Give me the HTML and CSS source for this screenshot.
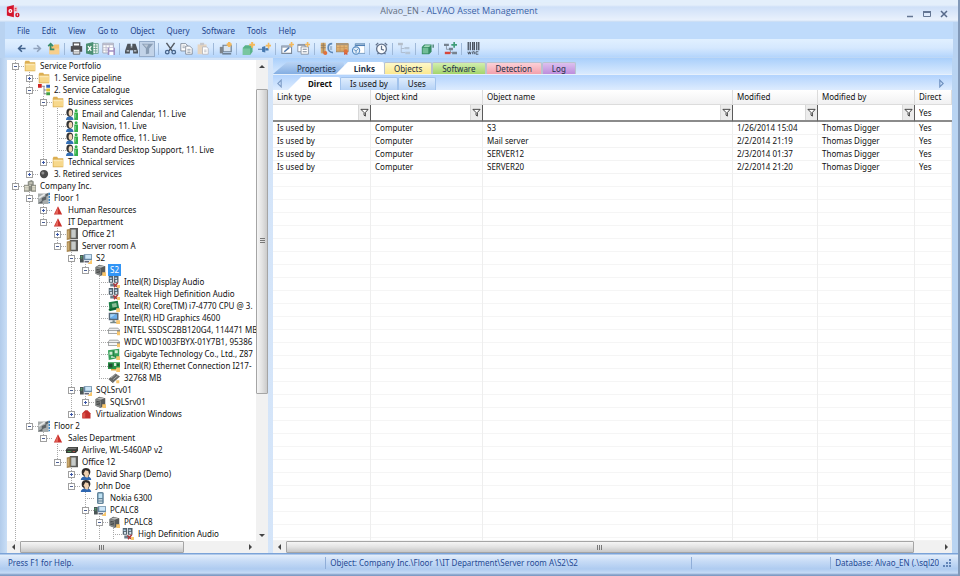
FILE: index.html
```html
<!DOCTYPE html>
<html lang="en">
<head>
<meta charset="utf-8">
<title>Alvao_EN - ALVAO Asset Management</title>
<link rel="stylesheet" href="styles.css">
</head>
<body>
<svg class="sprite" aria-hidden="true">
  <symbol id="logo" viewBox="0 0 16 16"><path d="M1 3l8-2v14l-8-2z" fill="#d4142c"/><circle cx="5" cy="8" r="2.2" fill="#fff"/><circle cx="5" cy="8" r=".9" fill="#d4142c"/><path d="M9 3h4v6H9z" fill="#f6c6cc"/><path d="M10 5h2M10 7h2" stroke="#d4142c"/><circle cx="13" cy="12.500" r="2.500" fill="#d4142c"/><path d="M13 11v2.500" stroke="#fff"/></symbol>
  <symbol id="back" viewBox="0 0 16 16"><path d="M13 8H5M8.500 4L4.500 8l4 4" fill="none" stroke="#41628c" stroke-width="2"/></symbol>
  <symbol id="forward" viewBox="0 0 16 16"><path d="M3 8h8M7.500 4l4 4-4 4" fill="none" stroke="#91a3bd" stroke-width="2"/></symbol>
  <symbol id="upfolder" viewBox="0 0 16 16"><path d="M3 5h5l1-2h6v12H3z" fill="#f3c273"/><path d="M3 8h12v7H3z" fill="#f8cf8c"/><path d="M9 9H4.500V3M1.500 5l3-3 3 3" fill="none" stroke="#388c6b" stroke-width="2"/></symbol>
  <symbol id="print" viewBox="0 0 16 16"><path d="M4 1h8v4H4z" fill="#fff" stroke="#4d4d50" stroke-width="1.500"/><path d="M1 5h14v7H1z" fill="#4d4d50"/><path d="M4 9h8v6H4z" fill="#fff" stroke="#4d4d50"/><path d="M5 11.500h6M5 13.500h6" stroke="#999"/></symbol>
  <symbol id="excel" viewBox="0 0 16 16"><path d="M8 2h7v12H8z" fill="#fff" stroke="#5b9a80"/><path d="M9 5h5M9 8h5M9 11h5M12 2v12" stroke="#5b9a80"/><path d="M0 2l9-2v16l-9-2z" fill="#4b8f72"/><path d="M2.500 5l4 6M6.500 5l-4 6" stroke="#fff" stroke-width="1.500"/></symbol>
  <symbol id="savegrid" viewBox="0 0 16 16"><path d="M1 1.500h13v12H1z" fill="#fff" stroke="#999cab"/><path d="M1 2h13v2H1z" fill="#b7b8c9"/><path d="M1 7h13M1 10h13M5 4v9M9 4v9" stroke="#b7b8c9"/><path d="M7 7h9v9H7z" fill="#9f8fc3"/><path d="M9 7h5v3H9zM9 12h5v4H9z" fill="#fff"/></symbol>
  <symbol id="find" viewBox="0 0 16 16"><path d="M3 2h4v3h2V2h4l3 9v3h-6v-4H6v4H0v-3z" fill="#4e545b"/><path d="M2 11h3M11 11h3M7 6h2" stroke="#d0d7df" stroke-width="1.500"/></symbol>
  <symbol id="filter" viewBox="0 0 16 16"><path d="M1 2h14L10 8v6l-4 1V8z" fill="#899db4"/><path d="M3 3h6L7 7z" fill="#b9c6d5"/></symbol>
  <symbol id="cut" viewBox="0 0 16 16"><path d="M3 1l7 10M13 1L6 11" stroke="#555b63" stroke-width="1.800"/><circle cx="4" cy="12.500" r="2.200" fill="none" stroke="#46648b" stroke-width="1.600"/><circle cx="12" cy="12.500" r="2.200" fill="none" stroke="#46648b" stroke-width="1.600"/></symbol>
  <symbol id="copy" viewBox="0 0 16 16"><path d="M1 2h6l2 2v7H1z" fill="#fff" stroke="#77808e"/><path d="M7 5h5l3 3v7H7z" fill="#fff" stroke="#77808e"/><path d="M3 5h3M3 7h3M9 9h4M9 11h4M9 13h4" stroke="#8d97a5"/></symbol>
  <symbol id="paste" viewBox="0 0 16 16"><path d="M2 3h11v12H2z" fill="#e6d5c0"/><path d="M5 1h5v3H5z" fill="#c7c7ca"/><path d="M8 6h5l2 2v7H8z" fill="#fff" stroke="#b1b4bb"/><path d="M10 10h3M10 12h3" stroke="#b1b4bb"/></symbol>
  <symbol id="newpc" viewBox="0 0 16 16"><path d="M5 4h10v8H5z" fill="#d9e4ef" stroke="#6f8194" stroke-width="1.500"/><path d="M1 6h4v8H1z" fill="#7d848b"/><path d="M4 14.500h11" stroke="#6f8194" stroke-width="2"/><path d="M12.500 0v6M9.500 3h6" stroke="#f4b95c" stroke-width="3"/></symbol>
  <symbol id="newbox" viewBox="0 0 16 16"><path d="M1 7l3-3h9v8l-3 4H1z" fill="#59b287"/><path d="M1 8h9v8H1z" fill="#78c6a0"/><path d="M12.500 0v7M9 3.500h7" stroke="#f4b95c" stroke-width="2.500"/></symbol>
  <symbol id="newlink" viewBox="0 0 16 16"><path d="M0 9h7" stroke="#688cb5" stroke-width="1.500"/><path d="M5 6l4-1v8l-4-1z" fill="#4779b0"/><path d="M9 9h4" stroke="#4779b0" stroke-width="3"/><path d="M13 1v7M9.500 4.500h6.500" stroke="#f4b95c" stroke-width="2"/></symbol>
  <symbol id="edit" viewBox="0 0 16 16"><path d="M1 5h12v9H1z" fill="#fff" stroke="#7c8898" stroke-width="1.300"/><path d="M1 6h12" stroke="#9dabbd" stroke-width="2"/><path d="M4 12l6-5" stroke="#5078aa" stroke-width="2"/><path d="M13 0v6M10 3h6" stroke="#f4b95c" stroke-width="2"/></symbol>
  <symbol id="forms" viewBox="0 0 16 16"><path d="M1 3h9v9H1z" fill="#fff" stroke="#7c8898"/><path d="M5 6h9v9H5z" fill="#fff" stroke="#7c8898"/><path d="M7 9h5M7 12h5M1 4h9" stroke="#7c8898" stroke-width="1.300"/><path d="M13 0v6M10 3h6" stroke="#f4b95c" stroke-width="2"/></symbol>
  <symbol id="tools" viewBox="0 0 16 16"><path d="M1 1h6v13H1z" fill="#d5a868"/><path d="M1 4h6M1 7h6M4 1v13" stroke="#8b7a60"/><circle cx="6.500" cy="13.500" r="2.500" fill="#e0703c"/><path d="M15 2c-3 0-5 2-5 5s2 6 6 6" fill="none" stroke="#5d88b8" stroke-width="2"/><path d="M12 5h3v5h-3z" fill="#a5bbd2"/></symbol>
  <symbol id="cert" viewBox="0 0 16 16"><path d="M0 2h15v10H0z" fill="#e3b474" stroke="#9a7f5a"/><path d="M0 2h15v2H0z" fill="#aa967a"/><path d="M1 7h13M1 10h13M5 4v8M10 4v8" stroke="#c4945a"/><path d="M10 12v4l2-1 2 1v-4" fill="#cf573b"/><circle cx="12" cy="11.500" r="2.500" fill="#e0703c"/></symbol>
  <symbol id="webform" viewBox="0 0 16 16"><path d="M4 2h12v12H4z" fill="#fff" stroke="#658fb9"/><path d="M4 3h12v2H4z" fill="#4e7fb5"/><circle cx="5" cy="10.500" r="4.500" fill="#e2edf7" stroke="#568ac0" stroke-width="1.300"/><path d="M2 9l3 2 3-3M5 11v3" stroke="#568ac0" fill="none"/></symbol>
  <symbol id="clock" viewBox="0 0 16 16"><circle cx="8" cy="8.500" r="6" fill="#f9fbfd" stroke="#61718a" stroke-width="1.600"/><path d="M8 4.500V9l3 1M1 4l3-3M15 4l-3-3M3 15l2-2M13 15l-2-2" fill="none" stroke="#61718a" stroke-width="1.500"/></symbol>
  <symbol id="branch" viewBox="0 0 16 16"><path d="M0 1h6v3H0z" fill="#b5bec9"/><path d="M4 4v9h5M4 8h4" fill="none" stroke="#a7b5c6"/><path d="M8 6h6v3H8zM9 12h6v3H9z" fill="#b5c5d7"/></symbol>
  <symbol id="green" viewBox="0 0 16 16"><path d="M1 6l3-3h9v9l-3 3H1z" fill="#368b63"/><path d="M2 7h7v7H2z" fill="#71bd97"/><path d="M3 6h7l2-2H5z" fill="#a2dabb"/><path d="M14 3h2v4h-2z" fill="#5f8f86"/></symbol>
  <symbol id="compare" viewBox="0 0 16 16"><path d="M0 2h6v3H0zM6 7h5v3H6zM10 12h6v3h-6z" fill="#76828f"/><path d="M3 5v4h3M8 10v3h3" stroke="#818c9b" fill="none"/><path d="M12.500 0v7M9 3.500h7" stroke="#3f9d78" stroke-width="2"/><path d="M1 13.500h7" stroke="#d6473c" stroke-width="3"/></symbol>
  <symbol id="barcode" viewBox="0 0 16 16"><path d="M1.500 0v10M4 0v10M7 0v10M9 0v10M12 0v10M14.500 0v10" stroke="#3d4653" stroke-width="1.500"/><path d="M1 12l1 3 1-3 1 3 1-3M7 15v-3h2v3M14 12h-3v3h3" fill="none" stroke="#3d4653"/></symbol>
  <symbol id="funnel" viewBox="0 0 10 10"><path d="M1 1.500h8L6 5v4L4.500 8V5z" fill="#fff" stroke="#333"/></symbol>

  <symbol id="folder" viewBox="0 0 16 16"><path d="M1 3l1-2h5l1 2h7v12H1z" fill="#dcae52"/><path d="M2 5h13v9H2z" fill="#f7d88b"/><path d="M2 5h12v2H2z" fill="#fbe7b3"/></symbol>
  <symbol id="catalogue" viewBox="0 0 16 16"><path d="M0 0h5v5H0z" fill="#d02424"/><path d="M5 3h4M8 3v11M8 8h3M8 13h3" stroke="#667" fill="none"/><path d="M11 1h5v4h-5z" fill="#3366bd"/><path d="M11 6h5v4h-5z" fill="#e1c335"/><path d="M11 11h5v4h-5z" fill="#42a045"/></symbol>
  <symbol id="service" viewBox="0 0 16 16"><path d="M0 16c0-4 3-5 5-5s5 1 5 5z" fill="#336fb5"/><ellipse cx="5" cy="6" rx="4.500" ry="5.500" fill="#333"/><ellipse cx="6" cy="6.500" rx="2.500" ry="4" fill="#f1d5b5"/><path d="M11 6h5v10h-5z" fill="#35b04c"/><circle cx="13.500" cy="3.500" r="2" fill="#35b04c"/><path d="M12.500 8v5" stroke="#8bdc91"/></symbol>
  <symbol id="ball" viewBox="0 0 16 16"><circle cx="8" cy="8" r="5.500" fill="#4c4c4c"/><circle cx="6.500" cy="6.500" r="2" fill="#919191"/></symbol>
  <symbol id="company" viewBox="0 0 16 16"><path d="M5 2l5-2 3 2v13H5z" fill="#8e9188"/><path d="M0 7h7v8H0zM10 7h6v8h-6z" fill="#b8b8ab" stroke="#75776e"/><path d="M1 9h5M1 12h5M11 9h4M11 12h4M7 4h4M7 7h2" stroke="#f1edda" stroke-width="1.300"/></symbol>
  <symbol id="floor" viewBox="0 0 16 16"><path d="M0 2h14v14H0z" fill="#a8adad"/><path d="M0 15l5-3V8l5-2V3l4-2v3l-3 2v4l-5 2v3z" fill="#5c6265"/><path d="M1 8l8-5" stroke="#e6e8e8" stroke-width="2"/><path d="M15 1v14" stroke="#3b83c2" stroke-width="2" stroke-dasharray="3 1"/></symbol>
  <symbol id="dept" viewBox="0 0 16 16"><path d="M8 3l5.500 11h-11z" fill="#c9302c"/><path d="M8 4v9H4z" fill="#e4675c"/></symbol>
  <symbol id="room" viewBox="0 0 16 16"><path d="M5 0h11v15H5z" fill="#5c5c5a"/><path d="M7 2h6v11H7z" fill="#c7cbc9"/><path d="M1 2l5-1v14l-5 1z" fill="#a8864e"/><path d="M2 4l2-1v10l-2 1z" fill="#c9aa71"/></symbol>
  <symbol id="computer" viewBox="0 0 16 16"><path d="M0 4h5v10H0z" fill="#4b5556"/><path d="M1 6h2M1 8h2" stroke="#54cc76"/><path d="M5 3h11v8H5z" fill="#6688a5"/><path d="M7 4h8v5H7z" fill="#cce5f7"/><path d="M6 13h6" stroke="#667" stroke-width="2"/><path d="M16 10v6h-6z" fill="#f8c66c"/></symbol>
  <symbol id="case" viewBox="0 0 16 16"><path d="M2 4l5-3 8 2v9l-6 4-7-3z" fill="#575a5a"/><path d="M2 4l7 2v10l-7-3z" fill="#888b8a"/><path d="M3 7l5 1M3 9l5 1M3 11l5 1" stroke="#343737"/><path d="M3 4l5-2 6 1-5 2z" fill="#babcba"/><path d="M11 11h5v5h-5z" fill="#f8c66c"/></symbol>
  <symbol id="audio" viewBox="0 0 16 16"><path d="M1 0h6v9H1zM8 0h6v9H8z" fill="#51616d"/><path d="M2 2h3v2H2zM9 2h3v2H9z" fill="#b3cfe4"/><circle cx="4" cy="6.500" r="1.500" fill="#dde9f0"/><circle cx="11" cy="6.500" r="1.500" fill="#dde9f0"/><path d="M3 10h7v4H3z" fill="#6b7d89"/><path d="M7 10l6 5M8 15l5-6" stroke="#ae3438" stroke-width="1.800"/><path d="M12 12h4v4h-4z" fill="#f8c66c"/></symbol>
  <symbol id="cpu" viewBox="0 0 16 16"><path d="M1 3l12-2 2 11-13 3z" fill="#1c7e46"/><path d="M5 5l6-1 1 5-6 1z" fill="#8bbd98"/><path d="M1 13l11-2" stroke="#105c31" stroke-width="2"/><path d="M11 11h5v5h-5z" fill="#f8c66c"/></symbol>
  <symbol id="monitor" viewBox="0 0 16 16"><path d="M1 1h13v10H1z" fill="#566777"/><path d="M3 3h9v6H3z" fill="#6caeea"/><path d="M3 3h7L3 8z" fill="#a7d4f5"/><path d="M6 11h3v2h3v2H3v-2h3z" fill="#788"/><path d="M11 11h5v5h-5z" fill="#f8c66c"/></symbol>
  <symbol id="disk" viewBox="0 0 16 16"><path d="M2 5h11l3 3v5H0V8z" fill="#8b8e8f"/><path d="M2 6h11l2 2H1z" fill="#eee"/><path d="M1 9h11v3H1z" fill="#f7f7f7"/><path d="M12 10h4v5h-4z" fill="#f8c66c"/></symbol>
  <symbol id="board" viewBox="0 0 16 16"><path d="M0 3l15-2v12L1 16z" fill="#36a05a"/><path d="M2 5h4v4H2zM9 3h4v4H9zM4 11h5v2H4z" fill="#d2ead2"/><path d="M7 4v7h4" stroke="#176b34" fill="none"/><path d="M11 11h5v5h-5z" fill="#f8c66c"/></symbol>
  <symbol id="nic" viewBox="0 0 16 16"><path d="M0 3h16v9H0z" fill="#279346"/><path d="M1 5h5v5H1z" fill="#214b30"/><path d="M8 4h3v4H8z" fill="#d5e9d5"/><path d="M12 5h3v3h-3z" fill="#1c5e30"/><path d="M4 13h7" stroke="#d8ab43" stroke-width="2"/><path d="M11 10h5v6h-5z" fill="#f8c66c"/></symbol>
  <symbol id="ram" viewBox="0 0 16 16"><path d="M1 9l9-7 6 4-9 8z" fill="#666968"/><path d="M4 8l6-5M7 10l6-5" stroke="#bdbfbd"/><path d="M1 9l6 5v1L1 10z" fill="#333"/><path d="M11 11h4v4h-4z" fill="#f8c66c"/></symbol>
  <symbol id="virtual" viewBox="0 0 16 16"><path d="M3 14V7l4-4h3l4 4v7z" fill="#c32f2c"/><path d="M3 8l4-2v7H3z" fill="#db544b"/></symbol>
  <symbol id="router" viewBox="0 0 16 16"><path d="M3 4h13v5l-3 3H0V7z" fill="#393c38"/><path d="M3 5h12l-2 2H1z" fill="#777"/><path d="M2 10h5" stroke="#4fb461"/><path d="M9 10h3" stroke="#d05447"/></symbol>
  <symbol id="person" viewBox="0 0 16 16"><path d="M1 16c0-3 3-5 7-5s7 2 7 5z" fill="#2e66b0"/><path d="M3 9c-2-5 0-9 5-9s7 4 5 8l-2 4H7z" fill="#302b29"/><path d="M7 3l4 1 1 4-2 5-3-1-2-5z" fill="#efd0af"/></symbol>
  <symbol id="phone" viewBox="0 0 16 16"><rect x="4" y="0" width="9" height="16" rx="2" fill="#63859c"/><path d="M6 2h5v6H6z" fill="#bfe2f4"/><path d="M6 10h5M6 12h5M6 14h5" stroke="#e0e9ee"/></symbol>
</svg>

<header class="titlebar">
  <svg class="logo"><use href="#logo"/></svg>
  <h1>Alvao_EN - <b>ALVAO Asset Management</b></h1>
  <div class="winbtns">
    <button aria-label="Minimize"><svg viewBox="0 0 8 8"><path d="M1 6.500h6" stroke="#647693" stroke-width="1.500"/></svg></button>
    <button aria-label="Maximize"><svg viewBox="0 0 8 8"><path d="M.5 1.500h7v5h-7z" fill="none" stroke="#647693"/><path d="M0 2h8" stroke="#647693" stroke-width="2"/></svg></button>
    <button aria-label="Close"><svg viewBox="0 0 8 8"><path d="M1 1l6 6M7 1L1 7" stroke="#56698a" stroke-width="1.500"/></svg></button>
  </div>
</header>

<nav class="menu">
  <button>File</button><button>Edit</button><button>View</button><button>Go to</button><button>Object</button><button>Query</button><button>Software</button><button>Tools</button><button>Help</button>
</nav>

<div class="toolbar">
  <button aria-label="Back"><svg><use href="#back"/></svg></button>
  <button aria-label="Forward"><svg><use href="#forward"/></svg></button>
  <button aria-label="Up"><svg><use href="#upfolder"/></svg></button>
  <i></i>
  <button aria-label="Print"><svg><use href="#print"/></svg></button>
  <button aria-label="Excel"><svg><use href="#excel"/></svg></button>
  <button aria-label="Save view"><svg><use href="#savegrid"/></svg></button>
  <i></i>
  <button aria-label="Find"><svg><use href="#find"/></svg></button>
  <button class="pressed" aria-label="Filter"><svg><use href="#filter"/></svg></button>
  <i></i>
  <button aria-label="Cut"><svg><use href="#cut"/></svg></button>
  <button aria-label="Copy"><svg><use href="#copy"/></svg></button>
  <button aria-label="Paste"><svg><use href="#paste"/></svg></button>
  <i></i>
  <button aria-label="New computer"><svg><use href="#newpc"/></svg></button>
  <i></i>
  <button aria-label="New object"><svg><use href="#newbox"/></svg></button>
  <button aria-label="New link"><svg><use href="#newlink"/></svg></button>
  <i></i>
  <button aria-label="New property"><svg><use href="#edit"/></svg></button>
  <button aria-label="New form"><svg><use href="#forms"/></svg></button>
  <i></i>
  <button aria-label="Tools"><svg><use href="#tools"/></svg></button>
  <button aria-label="License"><svg><use href="#cert"/></svg></button>
  <button aria-label="Web form"><svg><use href="#webform"/></svg></button>
  <i></i>
  <button aria-label="History"><svg><use href="#clock"/></svg></button>
  <i></i>
  <button aria-label="Branch"><svg><use href="#branch"/></svg></button>
  <i></i>
  <button aria-label="Object"><svg><use href="#green"/></svg></button>
  <i></i>
  <button aria-label="Compare"><svg><use href="#compare"/></svg></button>
  <i></i>
  <button aria-label="Barcode"><svg><use href="#barcode"/></svg></button>
</div>

<main>
  <section class="pane treepane">
    <div class="treeview">
      <ul class="tree">
        <li><div class="node"><button class="box" aria-label="Collapse"></button><svg><use href="#folder"/></svg><span>Service Portfolio</span></div>
          <ul>
            <li><div class="node"><button class="box plus" aria-label="Expand"></button><svg><use href="#folder"/></svg><span>1. Service pipeline</span></div></li>
            <li><div class="node"><button class="box" aria-label="Collapse"></button><svg><use href="#catalogue"/></svg><span>2. Service Catalogue</span></div>
              <ul>
                <li><div class="node"><button class="box" aria-label="Collapse"></button><svg><use href="#folder"/></svg><span>Business services</span></div>
                  <ul>
                    <li><div class="node leaf"><svg><use href="#service"/></svg><span>Email and Calendar, 11. Live</span></div></li>
                    <li><div class="node leaf"><svg><use href="#service"/></svg><span>Navision, 11. Live</span></div></li>
                    <li><div class="node leaf"><svg><use href="#service"/></svg><span>Remote office, 11. Live</span></div></li>
                    <li><div class="node leaf"><svg><use href="#service"/></svg><span>Standard Desktop Support, 11. Live</span></div></li>
                  </ul>
                </li>
                <li><div class="node"><button class="box plus" aria-label="Expand"></button><svg><use href="#folder"/></svg><span>Technical services</span></div></li>
              </ul>
            </li>
            <li><div class="node"><button class="box plus" aria-label="Expand"></button><svg><use href="#ball"/></svg><span>3. Retired services</span></div></li>
          </ul>
        </li>
        <li class="more"><div class="node"><button class="box" aria-label="Collapse"></button><svg><use href="#company"/></svg><span>Company Inc.</span></div>
          <ul>
            <li><div class="node"><button class="box" aria-label="Collapse"></button><svg><use href="#floor"/></svg><span>Floor 1</span></div>
              <ul>
                <li><div class="node"><button class="box plus" aria-label="Expand"></button><svg><use href="#dept"/></svg><span>Human Resources</span></div></li>
                <li><div class="node"><button class="box" aria-label="Collapse"></button><svg><use href="#dept"/></svg><span>IT Department</span></div>
                  <ul>
                    <li><div class="node"><button class="box plus" aria-label="Expand"></button><svg><use href="#room"/></svg><span>Office 21</span></div></li>
                    <li><div class="node"><button class="box" aria-label="Collapse"></button><svg><use href="#room"/></svg><span>Server room A</span></div>
                      <ul>
                        <li><div class="node"><button class="box" aria-label="Collapse"></button><svg><use href="#computer"/></svg><span>S2</span></div>
                          <ul>
                            <li><div class="node"><button class="box" aria-label="Collapse"></button><svg><use href="#case"/></svg><span class="selected">S2</span></div>
                              <ul>
                                <li><div class="node leaf"><svg><use href="#audio"/></svg><span>Intel(R) Display Audio</span></div></li>
                                <li><div class="node leaf"><svg><use href="#audio"/></svg><span>Realtek High Definition Audio</span></div></li>
                                <li><div class="node leaf"><svg><use href="#cpu"/></svg><span>Intel(R) Core(TM) i7-4770 CPU @ 3.</span></div></li>
                                <li><div class="node leaf"><svg><use href="#monitor"/></svg><span>Intel(R) HD Graphics 4600</span></div></li>
                                <li><div class="node leaf"><svg><use href="#disk"/></svg><span>INTEL SSDSC2BB120G4, 114471 MB</span></div></li>
                                <li><div class="node leaf"><svg><use href="#disk"/></svg><span>WDC WD1003FBYX-01Y7B1, 95386</span></div></li>
                                <li><div class="node leaf"><svg><use href="#board"/></svg><span>Gigabyte Technology Co., Ltd., Z87</span></div></li>
                                <li><div class="node leaf"><svg><use href="#nic"/></svg><span>Intel(R) Ethernet Connection I217-</span></div></li>
                                <li><div class="node leaf"><svg><use href="#ram"/></svg><span>32768 MB</span></div></li>
                              </ul>
                            </li>
                          </ul>
                        </li>
                        <li><div class="node"><button class="box" aria-label="Collapse"></button><svg><use href="#computer"/></svg><span>SQLSrv01</span></div>
                          <ul>
                            <li><div class="node"><button class="box plus" aria-label="Expand"></button><svg><use href="#case"/></svg><span>SQLSrv01</span></div></li>
                          </ul>
                        </li>
                        <li><div class="node"><button class="box plus" aria-label="Expand"></button><svg><use href="#virtual"/></svg><span>Virtualization Windows</span></div></li>
                      </ul>
                    </li>
                  </ul>
                </li>
              </ul>
            </li>
            <li><div class="node"><button class="box" aria-label="Collapse"></button><svg><use href="#floor"/></svg><span>Floor 2</span></div>
              <ul>
                <li><div class="node"><button class="box" aria-label="Collapse"></button><svg><use href="#dept"/></svg><span>Sales Department</span></div>
                  <ul>
                    <li><div class="node leaf"><svg><use href="#router"/></svg><span>Airlive, WL-5460AP v2</span></div></li>
                    <li><div class="node"><button class="box" aria-label="Collapse"></button><svg><use href="#room"/></svg><span>Office 12</span></div>
                      <ul>
                        <li><div class="node"><button class="box plus" aria-label="Expand"></button><svg><use href="#person"/></svg><span>David Sharp (Demo)</span></div></li>
                        <li><div class="node"><button class="box" aria-label="Collapse"></button><svg><use href="#person"/></svg><span>John Doe</span></div>
                          <ul>
                            <li><div class="node leaf"><svg><use href="#phone"/></svg><span>Nokia 6300</span></div></li>
                            <li class="more"><div class="node"><button class="box" aria-label="Collapse"></button><svg><use href="#computer"/></svg><span>PCALC8</span></div>
                              <ul>
                                <li class="more"><div class="node"><button class="box" aria-label="Collapse"></button><svg><use href="#case"/></svg><span>PCALC8</span></div>
                                  <ul>
                                    <li class="more"><div class="node leaf"><svg><use href="#audio"/></svg><span>High Definition Audio</span></div></li>
                                  </ul>
                                </li>
                              </ul>
                            </li>
                          </ul>
                        </li>
                      </ul>
                    </li>
                  </ul>
                </li>
              </ul>
            </li>
          </ul>
        </li>
      </ul>
    </div>
    <div class="vscroll">
      <b class="arrow up"></b><div class="track"><div class="thumb"></div></div><b class="arrow down"></b>
    </div>
    <div class="hscroll">
      <b class="arrow left"></b><div class="track"><div class="thumb"></div></div><b class="arrow right"></b>
    </div>
  </section>

  <section class="pane detail">
    <nav class="tabs">
      <button class="t-prop">Properties</button><button class="t-links">Links</button><button class="t-objects">Objects</button><button class="t-soft">Software</button><button class="t-detect">Detection</button><button class="t-log">Log</button>
    </nav>
    <nav class="subtabs">
      <button class="nav" aria-label="Previous"><svg viewBox="0 0 8 8"><path d="M5.500 1v6L2.500 4z" fill="none" stroke="#7e9cc6"/></svg></button>
      <button class="direct">Direct</button><button class="blue">Is used by</button><button class="blue">Uses</button>
      <button class="nav next" aria-label="Next"><svg viewBox="0 0 8 8"><path d="M2.500 1v6l3-3z" fill="none" stroke="#6d8fbe"/></svg></button>
    </nav>
    <div class="grid">
      <table>
        <colgroup><col class="c-type"><col class="c-kind"><col><col class="c-mod"><col class="c-by"><col class="c-direct"></colgroup>
        <thead>
          <tr><th>Link type</th><th>Object kind</th><th>Object name</th><th>Modified</th><th>Modified by</th><th>Direct</th></tr>
          <tr class="filters">
            <td><div><input aria-label="Filter link type"><button aria-label="Filter"><svg><use href="#funnel"/></svg></button></div></td>
            <td><div><input aria-label="Filter object kind"><button aria-label="Filter"><svg><use href="#funnel"/></svg></button></div></td>
            <td><div><input aria-label="Filter object name"><button aria-label="Filter"><svg><use href="#funnel"/></svg></button></div></td>
            <td><div><input aria-label="Filter modified"><button aria-label="Filter"><svg><use href="#funnel"/></svg></button></div></td>
            <td><div><input aria-label="Filter modified by"><button aria-label="Filter"><svg><use href="#funnel"/></svg></button></div></td>
            <td><div><input aria-label="Filter direct" value="Yes"></div></td>
          </tr>
        </thead>
        <tbody>
          <tr><td>Is used by</td><td>Computer</td><td>S3</td><td>1/26/2014 15:04</td><td>Thomas Digger</td><td>Yes</td></tr>
          <tr><td>Is used by</td><td>Computer</td><td>Mail server</td><td>2/2/2014 21:19</td><td>Thomas Digger</td><td>Yes</td></tr>
          <tr><td>Is used by</td><td>Computer</td><td>SERVER12</td><td>2/3/2014 01:37</td><td>Thomas Digger</td><td>Yes</td></tr>
          <tr><td>Is used by</td><td>Computer</td><td>SERVER20</td><td>2/2/2014 21:20</td><td>Thomas Digger</td><td>Yes</td></tr>
          <tr class="rest"><td></td><td></td><td></td><td></td><td></td><td></td></tr>
        </tbody>
      </table>
    </div>
    <div class="hscroll">
      <b class="arrow left"></b><div class="track"><div class="thumb"></div></div><b class="arrow right"></b>
    </div>
  </section>
</main>

<footer class="status">
  <span class="help">Press F1 for Help.</span>
  <span class="object">Object: Company Inc.\Floor 1\IT Department\Server room A\S2\S2</span>
  <span class="blank"></span>
  <span class="db">Database: Alvao_EN (.\sql20</span>
  <svg class="grip" viewBox="0 0 9 9"><path d="M6 0h2v2H6zM3 3h2v2H3zM6 3h2v2H6zM0 6h2v2H0zM3 6h2v2H3zM6 6h2v2H6z" fill="#6285b8"/></svg>
</footer>
</body>
</html>
```
FILE: styles.css
```css
* { box-sizing: border-box; }

body {
  margin: 0;
  height: 100vh;
  display: flex;
  flex-direction: column;
  overflow: hidden;
  background: #b9d3f1;
  border-right: 2px solid #8299b8;
  font: 8px/12px "Noto Sans", "Open Sans", sans-serif;
  color: #111;
  white-space: nowrap;
}

button, input {
  font: inherit;
  color: inherit;
  margin: 0;
  padding: 0;
  border: 0;
  border-radius: 0;
  background: none;
}

ul { list-style: none; margin: 0; padding: 0; }
.sprite { display: none; }

/* Title bar */
.titlebar {
  flex: none;
  height: 22px;
  display: grid;
  grid-template-columns: 28px 1fr 64px;
  align-items: center;
  padding: 0 10px 0 6px;
  background: linear-gradient(#e4effb 0 5px, #cfe0f8 7px, #e9f1fc 20px, #c3d9f3);
}
.logo { width: 14px; height: 14px; }
.titlebar h1 {
  margin: 0;
  font: 400 9px/12px "Open Sans", sans-serif;
  text-align: center;
  color: #646f80;
}
.titlebar h1 b { font-weight: 400; color: #3a62a6; }
.winbtns { display: flex; justify-content: flex-end; gap: 9px; padding-top: 5px; }
.winbtns button { display: flex; }
.winbtns svg { width: 8px; height: 8px; }

/* Menu */
.menu {
  flex: none;
  display: flex;
  height: 17px;
  margin: 0 5px;
  padding-left: 6px;
  background: #bfdbfb;
  color: #25458b;
}
.menu button { padding: 0 6px; }

/* Toolbar */
.toolbar {
  flex: none;
  display: flex;
  align-items: center;
  height: 19px;
  margin: 0 5px;
  padding-left: 8px;
  background: linear-gradient(#e1f0ff, #d5e8fe 9px, #b4d5fc 18px, #c6d9ef);
}
.toolbar button {
  width: 16px;
  height: 16px;
  display: flex;
  align-items: center;
  justify-content: center;
}
.toolbar svg { width: 13px; height: 13px; }
.toolbar .pressed { border: 1px solid #94abc8; background: #c2d3e8; }
.toolbar i { width: 1px; height: 12px; margin: 0 3px; background: #9fb9d9; }

/* Panes */
main {
  flex: 1;
  min-height: 0;
  display: flex;
  gap: 5px;
  padding: 0 6px 0 7px;
  background: linear-gradient(90deg, #b2cceb, #c9def6 7px, #d5e5f9 280px, #b9d4f2);
}
.pane { min-width: 0; display: grid; }
.treepane {
  flex: 0 0 261px;
  margin-top: 2px;
  grid-template: minmax(0, 1fr) 12px / minmax(0, 1fr) 12px;
  background: #f1f1f1;
}
.detail {
  flex: 1;
  grid-template: 17px 15px minmax(0, 1fr) 12px / minmax(0, 1fr);
}

/* Tree */
.treeview { overflow: hidden; background: #fff; }
.tree { padding-left: 5px; height: 100%; }
.tree ul { margin-left: 14px; }
.tree li {
  background: repeating-linear-gradient(#a9a9a9 0 1px, #fff 1px 2px) 3px 0 / 1px 100% no-repeat;
}
.tree li:last-child { background-size: 1px 6px; }
.tree li.more { background-size: 1px 100%; }
.tree > li.more { min-height: 100%; }
.node {
  display: flex;
  align-items: center;
  height: 12px;
  background: repeating-linear-gradient(90deg, #a9a9a9 0 1px, transparent 1px 2px) 3px 6px / 10px 1px no-repeat;
}
.node svg { flex: none; width: 12px; height: 12px; margin: 0 2px 0 5px; }
.leaf svg { margin-left: 12px; }
.node span { padding: 0 2px; }
.node .selected { background: #3195f5; color: #fff; }
.box {
  flex: none;
  width: 7px;
  height: 7px;
  border: 1px solid #a0a0a0;
  background: linear-gradient(#4c5f93, #4c5f93) center / 3px 1px no-repeat #fff;
}
.box.plus {
  background:
    linear-gradient(#3b57a8, #3b57a8) center / 3px 1px no-repeat,
    linear-gradient(#3b57a8, #3b57a8) center / 1px 3px no-repeat #fff;
}

/* Scroll bars */
.vscroll, .hscroll, .track { display: flex; }
.vscroll { flex-direction: column; background: #f1f1f1; }
.hscroll { grid-column: 1; background: #f1f1f1; }
.track { flex: 1; min-width: 0; min-height: 0; }
.vscroll .track { flex-direction: column; }
.track::before, .track::after { content: ""; flex: 1 1 0; }
.thumb {
  display: flex;
  align-items: center;
  justify-content: center;
  border: 1px solid #a5a5a5;
  border-radius: 1px;
}
.thumb::after { content: ""; }
.vscroll .thumb { flex: 304 1 0; background: linear-gradient(90deg, #f5f5f5, #e3e3e3 50%, #cbcbcb); }
.vscroll .track::before { flex-grow: 17; }
.vscroll .track::after { flex-grow: 136; }
.vscroll .thumb::after {
  width: 5px;
  height: 6px;
  background: repeating-linear-gradient(#777 0 1px, transparent 1px 2px);
}
.hscroll .thumb { flex: 163 1 0; background: linear-gradient(#f5f5f5, #e3e3e3 50%, #c6c6c6); }
.hscroll .track::before { flex-grow: 1; }
.hscroll .track::after { flex-grow: 61; }
.detail .hscroll .thumb { flex-grow: 627; }
.detail .hscroll .track::before { flex-grow: 1; }
.detail .hscroll .track::after { flex-grow: 26; }
.hscroll .thumb::after {
  width: 6px;
  height: 5px;
  background: repeating-linear-gradient(90deg, #777 0 1px, transparent 1px 2px);
}
.arrow {
  flex: none;
  width: 12px;
  height: 12px;
  display: flex;
  align-items: center;
  justify-content: center;
}
.arrow::before { content: ""; border: 3px solid transparent; }
.arrow.up::before { border-top: 0; border-bottom-color: #444; }
.arrow.down::before { border-bottom: 0; border-top-color: #444; }
.arrow.left::before { border-left: 0; border-right-color: #444; }
.arrow.right::before { border-right: 0; border-left-color: #444; }

/* Tabs */
.tabs {
  display: flex;
  align-items: flex-end;
  background: linear-gradient(#a9cffb, #d9eafe);
  border-bottom: 1px solid #e6f0fc;
  color: #222f45;
}
.tabs button {
  height: 12px;
  padding: 0 9px;
  border-radius: 2px 2px 0 0;
  border: 1px solid #b9c2cf;
  border-bottom: 0;
  line-height: 11px;
}
.tabs .t-prop {
  padding: 0 8px 0 24px;
  border: 0;
  background: linear-gradient(#bad4f4, #84aee2);
  clip-path: polygon(14px 0, 100% 0, 100% 100%, 0 100%);
}
.tabs .t-links {
  margin-left: -8px;
  padding: 0 9px 0 18px;
  border: 0;
  background: #fff;
  font-weight: 700;
  clip-path: polygon(12px 0, 100% 0, 100% 100%, 0 100%);
}
.t-objects { background: linear-gradient(#fdf8c9, #fbe88f); }
.t-soft { background: linear-gradient(#d2eeae, #a4d46c); }
.t-detect { background: linear-gradient(#fbd0d7, #f3a0ac); }
.tabs .t-log { background: linear-gradient(#dcc0ee, #bd8ddc); }

.subtabs {
  display: flex;
  align-items: flex-end;
  padding: 0 6px 0 2px;
  background: linear-gradient(#b2d3fd, #deecfe);
}
.subtabs button {
  height: 13px;
  padding: 0 9px;
  border-radius: 2px 2px 0 0;
}
.subtabs .nav { display: flex; align-items: center; padding: 0; }
.subtabs .nav svg { width: 9px; height: 9px; }
.subtabs .next { margin-left: auto; }
.subtabs .direct {
  margin-left: 4px;
  padding: 0 8px 0 20px;
  background: #fff;
  font-weight: 700;
  clip-path: polygon(13px 0, 100% 0, 100% 100%, 0 100%);
}
.subtabs .blue {
  padding: 0 9px;
  border: 1px solid #a2c3ec;
  border-bottom: 0;
  background: linear-gradient(#dfedfd, #b5d2f6);
}

/* Grid */
.grid { overflow: hidden; background: #fff; }
table {
  width: 100%;
  height: 100%;
  table-layout: fixed;
  border-collapse: separate;
  border-spacing: 0;
}
.c-type { width: 98px; }
.c-kind { width: 112px; }
.c-mod { width: 85px; }
.c-by { width: 97px; }
.c-direct { width: 37px; }
th, td {
  height: 13px;
  padding: 0 4px;
  overflow: hidden;
  text-align: left;
  font-weight: 400;
  border-right: 1px solid #eeeeee;
  border-bottom: 1px solid #f3f3f3;
}
th {
  height: 15px;
  background: linear-gradient(#fff, #f1f1f2);
  border-color: #dcdcdc;
}
.filters td {
  height: 17px;
  padding: 0;
  border-right: 1px solid #5b5b5b;
  border-bottom: 2px solid #8b8b8b;
}
.filters td:last-child { border-right: 0; }
.filters div { display: flex; height: 15px; }
.filters input { flex: 1; min-width: 0; width: 0; padding: 0 4px; }
.filters button {
  width: 12px;
  display: flex;
  align-items: center;
  justify-content: center;
  background: #ececec;
  border-left: 1px solid #d8d8d8;
}
.filters svg { width: 9px; height: 9px; }
.rest td {
  height: auto;
  background: repeating-linear-gradient(transparent 0 12px, #f5f5f5 12px 13px);
}

/* Status bar */
.status {
  flex: none;
  display: flex;
  align-items: center;
  height: 23px;
  padding: 0 6px 3px 8px;
  background: linear-gradient(#7ba3d8 0 1px, #e3eefb 2px, #c8dcf6 8px, #aecbf0 16px, #c6dbf5 20px, #809cc4 22px);
  color: #1f4a94;
}
.status span { overflow: hidden; }
.help { flex: 318 1 0; }
.object, .blank, .db { border-left: 1px solid #90aed8; padding-left: 4px; }
.object { flex: 361 1 0; }
.blank { flex: 135 1 0; height: 12px; }
.db { flex: 104 1 0; }
.grip { flex: none; width: 9px; height: 9px; margin-left: 4px; }
```
